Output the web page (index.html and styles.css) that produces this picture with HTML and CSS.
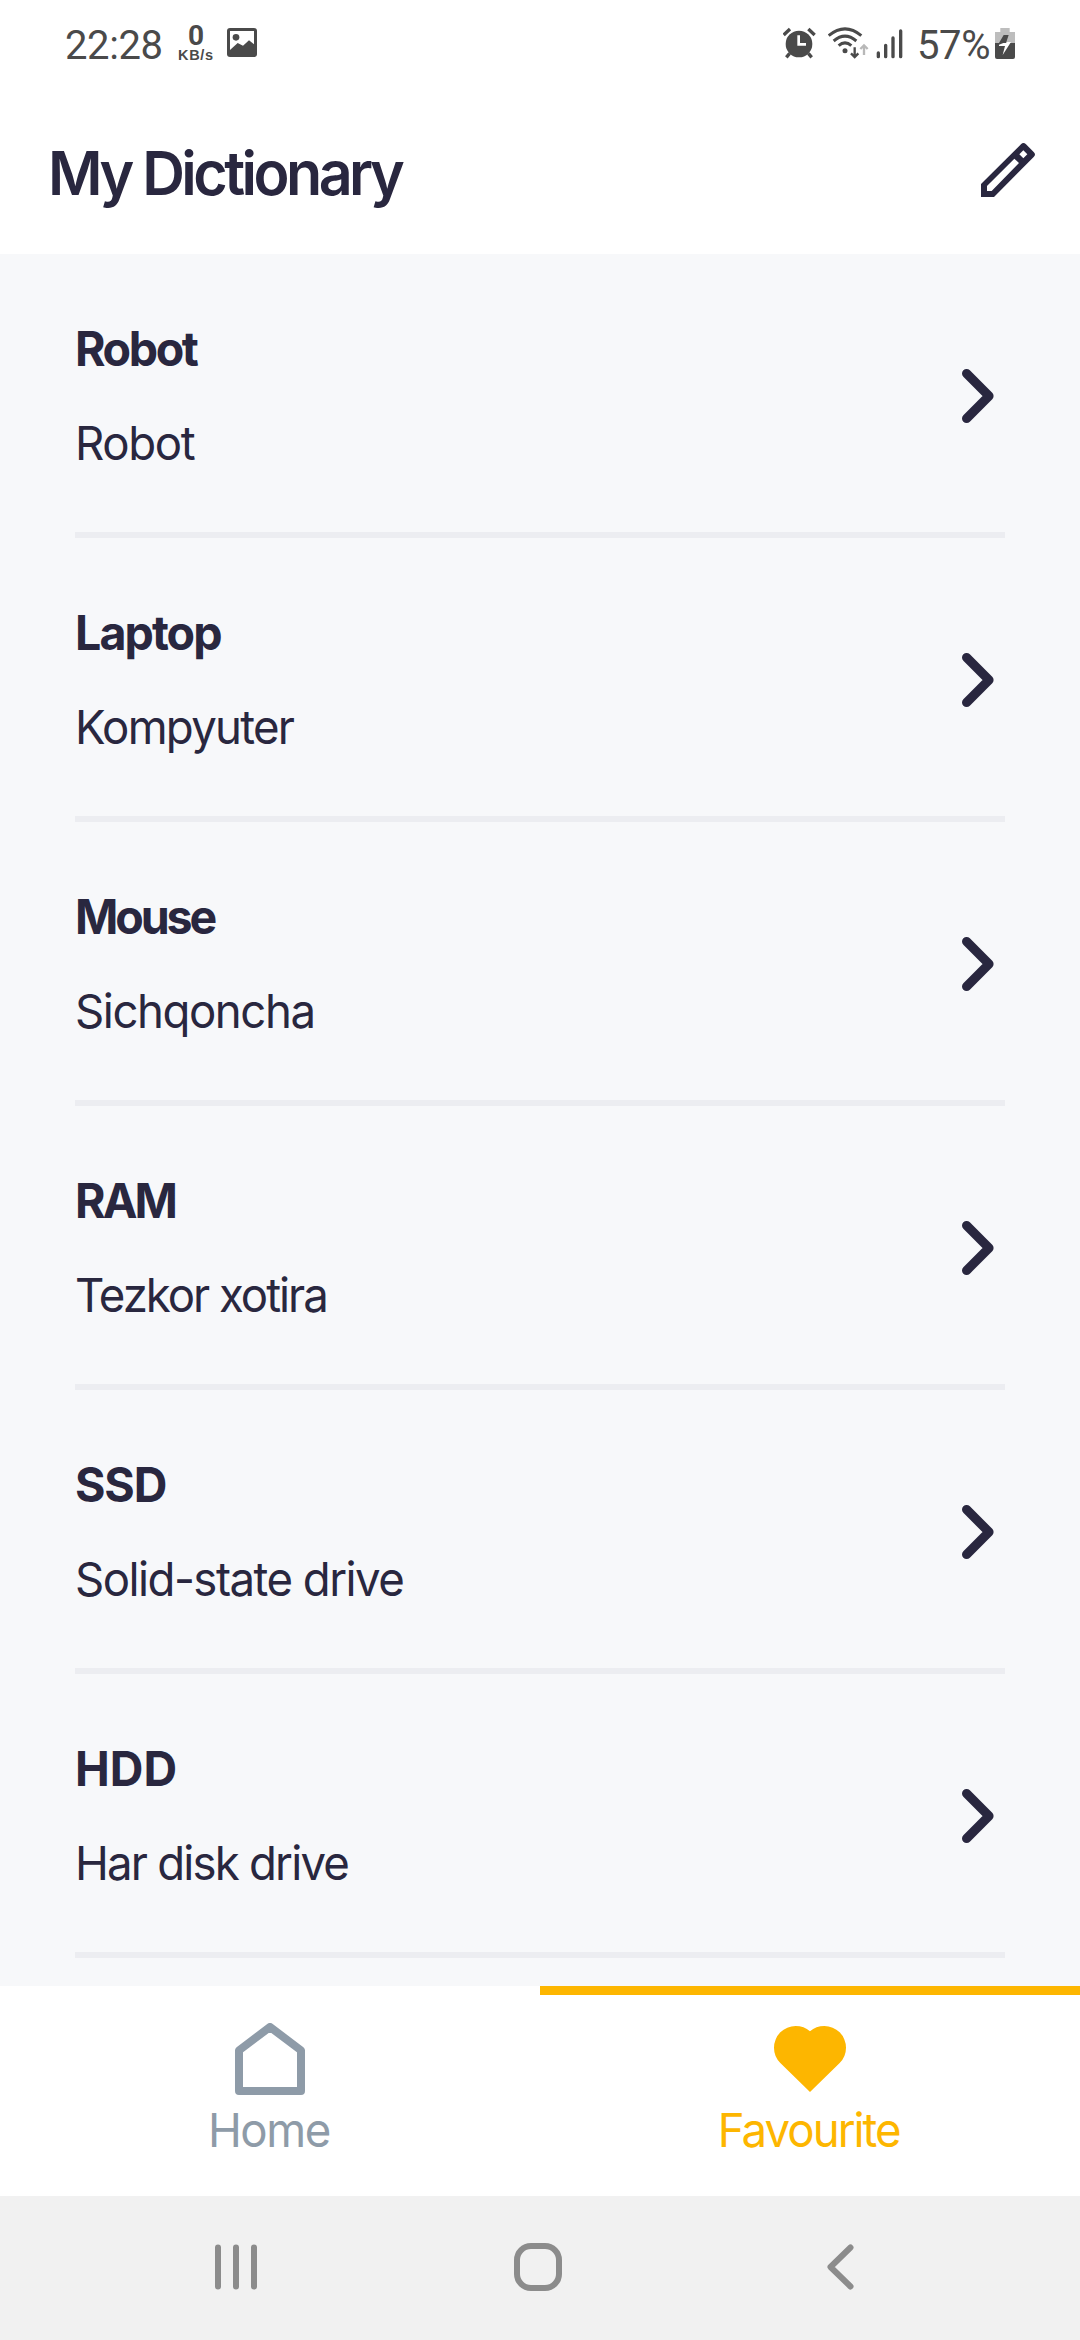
FILE: index.html
```html
<!DOCTYPE html>
<html lang="en">
<head>
<meta charset="utf-8">
<title>My Dictionary</title>
<link rel="stylesheet" href="styles.css">
</head>
<body>
<div class="app">
  <div class="status">
    <div class="status-group">
      <span class="time">22:28</span>
      <span class="traffic"><b class="traffic-value">0</b><b class="traffic-unit">KB/s</b></span>
      <svg class="picture" viewBox="0 0 90 87"><rect width="90" height="87" rx="9" fill="#4a4a4a"/><path d="M9 9H81V49L66 37L48 53L32 45L9 66Z" fill="#fff"/><circle cx="27" cy="28" r="10" fill="#4a4a4a"/></svg>
    </div>
    <div class="status-group">
      <svg class="alarm" viewBox="69 0 135 270"><g stroke="#4a4a4a" stroke-width="10" fill="none"><path d="M71 105L90 87M145 87L164 105M89 160L79 172M145 160L155 172"/></g><circle cx="117" cy="132" r="40" fill="#4a4a4a"/><path d="M116 106V133H138" stroke="#fff" stroke-width="8" fill="none"/></svg>
      <svg class="wifi" viewBox="204 0 144 270"><g stroke="#4a4a4a" stroke-width="9" fill="none"><path d="M206 107Q255 66 304 107M221 123Q255 94 289 123M236 137Q255 120 274 137"/></g><circle cx="255" cy="152" r="7.500" fill="#4a4a4a"/><path d="M284 142V170M273 160L284 171L295 160" stroke="#4a4a4a" stroke-width="7" fill="none"/><path d="M312 165V137M301 147L312 136L323 147" stroke="#b8b8b8" stroke-width="7" fill="none"/></svg>
      <svg class="signal" viewBox="348 0 123 270"><path d="M355 159V170M377 136V170M399 114V170M422 93V170" stroke="#4a4a4a" stroke-width="10" stroke-linecap="round"/></svg>
      <span class="percent">57%</span>
      <svg class="battery" viewBox="705 0 60 270"><path d="M721 84H749V96H765V129H705V96H721Z" fill="#bdbdbd"/><path d="M705 129H765V171Q765 177 759 177H711Q705 177 705 171Z" fill="#4a4a4a"/><path d="M731 105H746L738 129H717Z" fill="#4a4a4a"/><path d="M717 134L730 129H738L742 126H753L728 165L735 138H717Z" fill="#fff"/></svg>
    </div>
  </div>
  <header class="header">
    <h1 class="title">My Dictionary</h1>
    <svg class="edit" viewBox="123 69 162 162"><path fill="#29273f" fill-rule="evenodd" d="M123 192L243 73Q250 65 258 73L281 96Q289 103 281 111L162 231H123ZM141 198V213H155L237 129L223 116ZM250 91L238 103L250 115L262 103Z"/></svg>
  </header>
  <main class="list">
    <div class="item"><div class="words"><div class="word">Robot</div><div class="meaning">Robot</div></div><svg class="chevron" viewBox="0 0 32 54"><path d="M4.600 4.600L27 27L4.600 49.400"/></svg></div>
    <div class="item"><div class="words"><div class="word">Laptop</div><div class="meaning">Kompyuter</div></div><svg class="chevron" viewBox="0 0 32 54"><path d="M4.600 4.600L27 27L4.600 49.400"/></svg></div>
    <div class="item"><div class="words"><div class="word">Mouse</div><div class="meaning">Sichqoncha</div></div><svg class="chevron" viewBox="0 0 32 54"><path d="M4.600 4.600L27 27L4.600 49.400"/></svg></div>
    <div class="item"><div class="words"><div class="word">RAM</div><div class="meaning">Tezkor xotira</div></div><svg class="chevron" viewBox="0 0 32 54"><path d="M4.600 4.600L27 27L4.600 49.400"/></svg></div>
    <div class="item"><div class="words"><div class="word">SSD</div><div class="meaning">Solid-state drive</div></div><svg class="chevron" viewBox="0 0 32 54"><path d="M4.600 4.600L27 27L4.600 49.400"/></svg></div>
    <div class="item"><div class="words"><div class="word">HDD</div><div class="meaning">Har disk drive</div></div><svg class="chevron" viewBox="0 0 32 54"><path d="M4.600 4.600L27 27L4.600 49.400"/></svg></div>
  </main>
  <nav class="tabs">
    <div class="tab"><svg class="tab-icon" viewBox="162 279 216 216"><path d="M270 291L363 361V483H177V361Z" fill="none" stroke="#8e9ba8" stroke-width="24" stroke-linejoin="round"/></svg><span class="tab-label">Home</span></div>
    <div class="tab active"><svg class="tab-icon" viewBox="282 159 216 216"><path fill="#fdb600" d="M390 366L301 279A65 65 0 0 1 282 233A65 65 0 0 1 347 168Q372 168 390 184Q408 168 433 168A65 65 0 0 1 498 233A65 65 0 0 1 479 279Z"/></svg><span class="tab-label">Favourite</span></div>
  </nav>
  <div class="sysnav">
    <svg class="sys-icon" viewBox="0 0 48 48"><path d="M6 4.500V43.500M24 4.500V43.500M42 4.500V43.500"/></svg>
    <svg class="sys-icon" viewBox="0 0 48 48"><rect x="3" y="3" width="42" height="42" rx="14"/></svg>
    <svg class="sys-icon" viewBox="0 0 48 48"><path d="M34.500 4.500L14.500 24L34.500 43.500"/></svg>
  </div>
</div>
</body>
</html>
```

FILE: styles.css
```css
* { box-sizing: border-box; }
body { margin: 0; background: #fff; font-family: Inter, "Liberation Sans", sans-serif; }
svg { display: block; flex: none; }

.app { width: 1080px; height: 2340px; display: flex; flex-direction: column; overflow: hidden; }

.status { height: 90px; padding: 0 65px; display: flex; justify-content: space-between; color: #4a4a4a; }
.status-group { display: flex; align-items: flex-start; }
.time, .percent { font: 400 40px/92px Roboto, sans-serif; letter-spacing: -0.4px; }
.time { width: 113px; }
.percent { width: 78px; }
.traffic { width: 49px; padding-top: 23px; display: flex; flex-direction: column; }
.traffic-value { width: 36px; font-family: Roboto, sans-serif; font-size: 28px; line-height: 26px; text-align: center; }
.traffic-unit { font-family: "Liberation Sans", sans-serif; font-size: 14.5px; line-height: 12px; letter-spacing: 0.7px; }
.picture { width: 30px; height: 29px; margin-top: 28px; }
.alarm { width: 45px; height: 90px; }
.wifi { width: 48px; height: 90px; }
.signal { width: 41px; height: 90px; }
.battery { width: 20px; height: 90px; }

.title, .word, .meaning { transform: scaleX(0.97); transform-origin: left center; }

.header { height: 164px; padding: 53px 45px 0 48px; display: flex; justify-content: space-between; }
.title { margin: 0; font-size: 61px; font-weight: 630; line-height: 60px; letter-spacing: -3.65px; color: #29273f; }
.edit { width: 54px; height: 54px; }

.list { height: 1732px; padding: 0 75px; background: #f7f8fa; color: #29273f; }
.item { height: 284px; padding-right: 11px; border-bottom: 6px solid #ecedf1; display: flex; justify-content: space-between; align-items: flex-start; }
.words { padding-top: 65px; display: flex; flex-direction: column; gap: 34px; white-space: nowrap; }
.word { font-size: 48px; font-weight: 650; line-height: 60px; letter-spacing: -2.5px; }
.meaning { font-size: 47px; line-height: 60px; letter-spacing: -1.45px; }
.item:nth-child(2) .word { letter-spacing: -2px; }
.item:nth-child(2) .meaning { letter-spacing: -1.8px; }
.item:nth-child(3) .word { letter-spacing: -3.2px; }
.item:nth-child(3) .meaning { letter-spacing: -1.5px; }
.item:nth-child(4) .word { letter-spacing: -3px; }
.item:nth-child(4) .meaning { letter-spacing: -2.1px; }
.item:nth-child(5) .word { letter-spacing: -1.2px; }
.item:nth-child(5) .meaning { letter-spacing: -1.58px; }
.item:nth-child(6) .word { letter-spacing: 0; }
.item:nth-child(6) .meaning { letter-spacing: -1.87px; }
.chevron { width: 32px; height: 54px; margin-top: 115px; fill: none; stroke: #29273f; stroke-width: 9.2px; stroke-linecap: round; stroke-linejoin: round; }

.tabs { height: 210px; display: flex; background: #fff; }
.tab { flex: 1; padding-top: 28px; border-top: 9px solid transparent; display: flex; flex-direction: column; align-items: center; gap: 7px; color: #8e9ba8; }
.tab-label { margin-left: -2px; font-size: 47px; line-height: 56px; letter-spacing: -1.45px; transform: scaleX(0.97); }
.active { border-color: #fdb600; color: #fdb600; }
.active .tab-label { letter-spacing: -2.05px; }
.tab-icon { width: 72px; height: 72px; }

.sysnav { height: 144px; padding: 0 216px 2px 212px; display: flex; justify-content: space-between; align-items: center; background: #f1f1f1; }
.sys-icon { width: 48px; height: 48px; fill: none; stroke: #8c8c8c; stroke-width: 6px; stroke-linecap: round; stroke-linejoin: round; }
```
